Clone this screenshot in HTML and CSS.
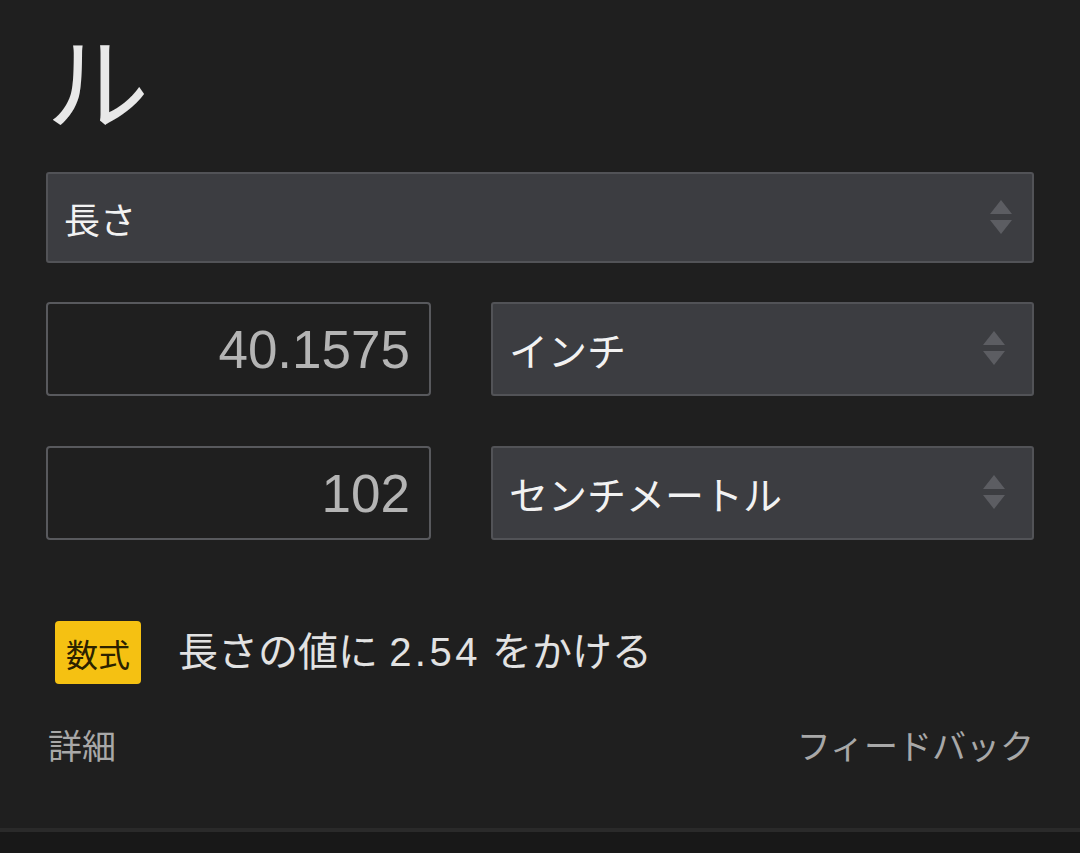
FILE: index.html
```html
<!DOCTYPE html>
<html lang="ja">
<head>
<meta charset="utf-8">
<link rel="stylesheet" href="styles.css">
</head>
<body>
<div class="page">
  <div class="title">ル</div>
  <div class="select select-main">
    <span class="select-text">長さ</span>
    <svg class="arrows" width="22" height="36" viewBox="0 0 22 36"><polygon points="11,0 22,14 0,14"/><polygon points="0,20 22,20 11,34"/></svg>
  </div>
  <div class="row">
    <div class="input">40.1575</div>
    <div class="select select-unit">
      <span class="select-text">インチ</span>
      <svg class="arrows" width="22" height="36" viewBox="0 0 22 36"><polygon points="11,0 22,14 0,14"/><polygon points="0,20 22,20 11,34"/></svg>
    </div>
  </div>
  <div class="row row-second">
    <div class="input">102</div>
    <div class="select select-unit">
      <span class="select-text">センチメートル</span>
      <svg class="arrows" width="22" height="36" viewBox="0 0 22 36"><polygon points="11,0 22,14 0,14"/><polygon points="0,20 22,20 11,34"/></svg>
    </div>
  </div>
  <div class="formula">
    <span class="badge">数式</span>
    <span class="formula-text">長さの値に <span class="num">2.54</span> をかける</span>
  </div>
  <div class="footer">
    <span class="link">詳細</span>
    <span class="link">フィードバック</span>
  </div>
</div>
<div class="bottom-bar"></div>
</body>
</html>
```

FILE: styles.css
```css
html, body {
  margin: 0;
  padding: 0;
  background: #1f1f1f;
  height: 853px;
  overflow: hidden;
}
body {
  font-family: "Liberation Sans", "Noto Sans CJK JP", sans-serif;
  color: #eeeeee;
}
.page {
  padding: 0 46px;
  height: 828px;
  box-sizing: border-box;
}
.title {
  height: 172px;
  box-sizing: border-box;
  padding-top: 27px;
  font-family: "Noto Sans CJK JP", sans-serif;
  font-size: 103px;
  line-height: 104px;
  color: #e8e8e8;
}
.select {
  display: flex;
  align-items: center;
  justify-content: space-between;
  box-sizing: border-box;
  background: #3c3d41;
  border: 2px solid #525357;
  border-radius: 3px;
}
.select-main {
  height: 91px;
  padding: 0 20px 0 16px;
}
.select-text {
  font-family: "Noto Sans CJK JP", sans-serif;
  font-size: 39px;
  color: #f2f2f2;
}
.select-main .select-text {
  font-size: 36px;
}
.arrows {
  fill: #5c5d62;
}
.row {
  display: flex;
  gap: 60px;
  margin-top: 39px;
  height: 94px;
}
.row-second {
  margin-top: 50px;
}
.input {
  width: 385px;
  box-sizing: border-box;
  border: 2px solid #58595d;
  border-radius: 4px;
  background: #1f1f1f;
  display: flex;
  align-items: center;
  justify-content: flex-end;
  padding-right: 19px;
  font-size: 53px;
  color: #b4b4b4;
}
.select-unit {
  flex: 1;
  padding: 0 27px 0 16px;
}
.formula {
  display: flex;
  align-items: center;
  gap: 37px;
  margin-top: 81px;
  padding-left: 9px;
}
.badge {
  width: 86px;
  height: 63px;
  box-sizing: border-box;
  background: #f5c112;
  border-radius: 4px;
  display: flex;
  align-items: center;
  justify-content: center;
  font-family: "Noto Sans CJK JP", sans-serif;
  font-size: 32px;
  color: #2b2200;
}
.formula-text {
  font-size: 40px;
  color: #e2e2e2;
  margin-top: -8px;
}
.num {
  letter-spacing: 3.5px;
}
.footer {
  display: flex;
  justify-content: space-between;
  margin-top: 36px;
  padding-left: 2px;
  font-family: "Noto Sans CJK JP", sans-serif;
  font-size: 34px;
  color: #a8a8a8;
}
.bottom-bar {
  height: 25px;
  border-top: 4px solid #2a2a2a;
  border-bottom: 1px solid #2c2c2c;
  background: #181818;
}
```
